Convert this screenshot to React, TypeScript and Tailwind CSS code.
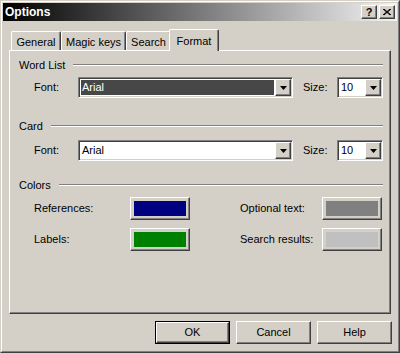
import React from "react";

const raised =
  "border border-t-white border-l-white border-r-[#404040] border-b-[#404040] shadow-[inset_-1px_-1px_0_#808080]";
const sunken =
  "border border-t-[#808080] border-l-[#808080] border-r-white border-b-white shadow-[inset_1px_1px_0_#404040,inset_-1px_-1px_0_#d4d0c8]";

const Arrow = () => (
  <svg width="7" height="4" viewBox="0 0 7 4">
    <polygon points="0,0 7,0 3.5,4" fill="#000" />
  </svg>
);

const Combo = ({value, width, dark}: {value: string; width: number; dark?: boolean}) => (
  <div className={`${sunken} bg-white h-[21px] flex p-[1px]`} style={{width}}>
    <div className="flex-1 flex p-[1px]">
      <div className={`flex-1 flex items-center pl-[1px] ${dark ? "bg-[#474747] text-white" : "text-black"}`}>
        {value}
      </div>
    </div>
    <div className={`w-[16px] h-[17px] bg-[#d4d0c8] flex items-center justify-center ${raised}`}>
      <Arrow />
    </div>
  </div>
);

const Group = ({title}: {title: string}) => (
  <div className="flex items-center h-[14px] pr-[7px]">
    <span>{title}</span>
    <div className="flex-1 ml-[8px] h-[2px] border-t border-t-[#808080] border-b border-b-white" />
  </div>
);

const ColorButton = ({color}: {color: string}) => (
  <div className={`w-[60px] h-[23px] bg-[#d4d0c8] p-[2px] ${raised}`}>
    <div className="w-full h-full border border-[#d4d0c8] p-0" style={{background: color}} />
  </div>
);

const Button = ({label, def}: {label: string; def?: boolean}) => (
  <div className={`w-[75px] h-[23px] ${def ? "border border-black" : ""}`}>
    <div className={`w-full h-full flex items-center justify-center ${raised}`}>{label}</div>
  </div>
);

const tabs = [
  {name: "General", w: 50},
  {name: "Magic keys", w: 65},
  {name: "Search", w: 45},
  {name: "Format", w: 46, active: true},
];

export default function App() {
  return (
    <div
      className="w-[400px] h-[353px] bg-[#d4d0c8] border border-t-[#d4d0c8] border-l-[#d4d0c8] border-r-[#404040] border-b-[#404040] text-[11px] text-black"
      style={{fontFamily: '"Liberation Sans", Arial, sans-serif'}}
    >
      <div className="w-full h-full border border-t-white border-l-white border-r-[#808080] border-b-[#808080] p-[1px]">
        {/* title bar */}
        <div className="h-[18px] flex items-center bg-[linear-gradient(to_right,#000000,#f4f4f4)] pl-[2px] pr-[2px]">
          <span className="text-white font-bold text-[12px] flex-1">Options</span>
          <div className={`w-[16px] h-[14px] bg-[#d4d0c8] flex items-center justify-center font-bold text-[11px] ${raised}`}>?</div>
          <div className={`w-[16px] h-[14px] ml-[2px] bg-[#d4d0c8] flex items-center justify-center ${raised}`}>
            <svg width="8" height="7" viewBox="0 0 8 7">
              <path d="M0 0 L7 6 M1 0 L8 6 M7 0 L0 6 M8 0 L1 6" stroke="#000" strokeWidth="1" />
            </svg>
          </div>
        </div>

        {/* tabs */}
        <div className="flex items-end mt-[8px] ml-[8px] h-[21px] relative z-10">
          {tabs.map((t) =>
            t.active ? (
              <div
                key={t.name}
                className="h-[22px] mb-[-1px] mx-[-2px] bg-[#d4d0c8] border-t border-l border-t-white border-l-white border-r border-r-[#404040] shadow-[inset_-1px_0_0_#808080] rounded-t-[2px] flex items-start justify-center pt-[3px]"
                style={{width: t.w + 4}}
              >
                {t.name}
              </div>
            ) : (
              <div
                key={t.name}
                className="h-[19px] bg-[#d4d0c8] border-t border-l border-t-white border-l-white border-r border-r-[#404040] shadow-[inset_-1px_0_0_#808080] rounded-t-[2px] flex items-center justify-center pt-[2px]"
                style={{width: t.w}}
              >
                {t.name}
              </div>
            )
          )}
        </div>

        {/* panel */}
        <div className={`ml-[6px] w-[382px] h-[264px] pl-[9px] pt-[7px] ${raised}`}>
          <Group title="Word List" />
          <div className="flex items-center mt-[5px] pl-[15px]">
            <span className="w-[44px]">Font:</span>
            <Combo value="Arial" width={215} dark />
            <span className="ml-[10px] w-[34px]">Size:</span>
            <Combo value="10" width={46} />
          </div>

          <div className="mt-[21px]">
            <Group title="Card" />
          </div>
          <div className="flex items-center mt-[7px] pl-[15px]">
            <span className="w-[44px]">Font:</span>
            <Combo value="Arial" width={215} />
            <span className="ml-[10px] w-[34px]">Size:</span>
            <Combo value="10" width={46} />
          </div>

          <div className="mt-[17px]">
            <Group title="Colors" />
          </div>
          <div className="flex items-center mt-[5px] pl-[15px]">
            <span className="w-[96px]">References:</span>
            <ColorButton color="#000080" />
            <span className="ml-[50px] w-[82px]">Optional text:</span>
            <ColorButton color="#808080" />
          </div>
          <div className="flex items-center mt-[8px] pl-[15px]">
            <span className="w-[96px]">Labels:</span>
            <ColorButton color="#008000" />
            <span className="ml-[50px] w-[82px]">Search results:</span>
            <ColorButton color="#c0c0c0" />
          </div>
        </div>

        {/* buttons */}
        <div className="flex justify-end gap-[6px] mt-[7px] mr-[5px]">
          <Button label="OK" def />
          <Button label="Cancel" />
          <Button label="Help" />
        </div>
      </div>
    </div>
  );
}
